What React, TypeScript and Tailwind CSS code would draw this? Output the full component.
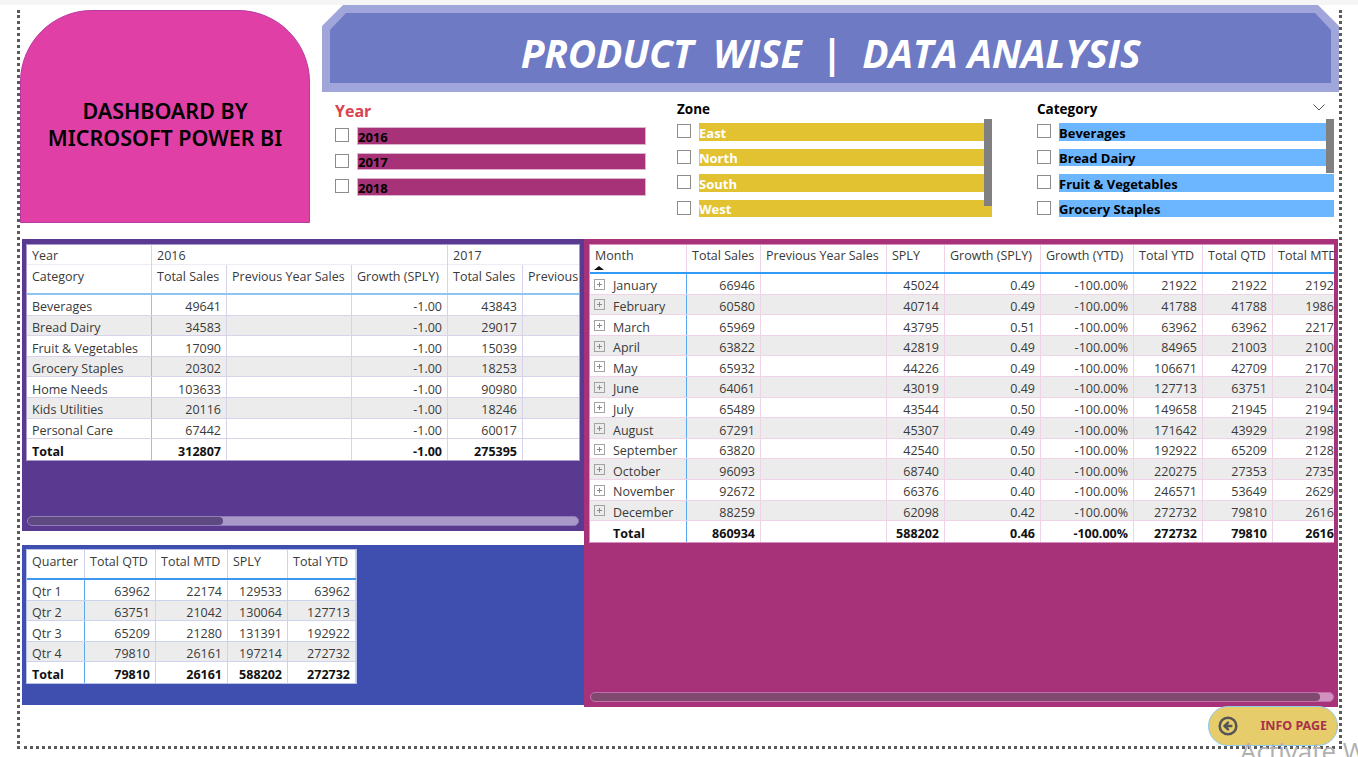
import { CircleArrowLeft } from "lucide-react";

const leftRows = [
  ["Beverages", "49641", "", "-1.00", "43843", ""],
  ["Bread Dairy", "34583", "", "-1.00", "29017", ""],
  ["Fruit & Vegetables", "17090", "", "-1.00", "15039", ""],
  ["Grocery Staples", "20302", "", "-1.00", "18253", ""],
  ["Home Needs", "103633", "", "-1.00", "90980", ""],
  ["Kids Utilities", "20116", "", "-1.00", "18246", ""],
  ["Personal Care", "67442", "", "-1.00", "60017", ""],
];
const leftTotal = ["Total", "312807", "", "-1.00", "275395", ""];

const quarterRows = [
  ["Qtr 1", "63962", "22174", "129533", "63962"],
  ["Qtr 2", "63751", "21042", "130064", "127713"],
  ["Qtr 3", "65209", "21280", "131391", "192922"],
  ["Qtr 4", "79810", "26161", "197214", "272732"],
];
const quarterTotal = ["Total", "79810", "26161", "588202", "272732"];

const monthRows = [
  ["January", "66946", "", "45024", "0.49", "-100.00%", "21922", "21922", "21922"],
  ["February", "60580", "", "40714", "0.49", "-100.00%", "41788", "41788", "19866"],
  ["March", "65969", "", "43795", "0.51", "-100.00%", "63962", "63962", "22174"],
  ["April", "63822", "", "42819", "0.49", "-100.00%", "84965", "21003", "21003"],
  ["May", "65932", "", "44226", "0.49", "-100.00%", "106671", "42709", "21706"],
  ["June", "64061", "", "43019", "0.49", "-100.00%", "127713", "63751", "21042"],
  ["July", "65489", "", "43544", "0.50", "-100.00%", "149658", "21945", "21945"],
  ["August", "67291", "", "45307", "0.49", "-100.00%", "171642", "43929", "21984"],
  ["September", "63820", "", "42540", "0.50", "-100.00%", "192922", "65209", "21280"],
  ["October", "96093", "", "68740", "0.40", "-100.00%", "220275", "27353", "27353"],
  ["November", "92672", "", "66376", "0.40", "-100.00%", "246571", "53649", "26296"],
  ["December", "88259", "", "62098", "0.42", "-100.00%", "272732", "79810", "26161"],
];
const monthTotal = ["Total", "860934", "", "588202", "0.46", "-100.00%", "272732", "79810", "26161"];

const PlusBox = () => (
  <svg width="11" height="11" viewBox="0 0 11 11" className="mr-[8px] -ml-px shrink-0 -mt-[5px]">
    <rect x="0.5" y="0.5" width="10" height="10" fill="none" stroke="#a3a3a3" />
    <path d="M3 5.5h5M5.5 3v5" stroke="#8a8a8a" />
  </svg>
);

type RowProps = {
  cells: string[];
  cols: string;
  divider: string;
  firstDivider: string;
  lineColor: string;
  striped?: boolean;
  bold?: boolean;
  tree?: boolean;
};

const BodyRow = ({ cells, cols, divider, firstDivider, lineColor, striped, bold, tree }: RowProps) => (
  <div
    className={`grid h-[20.6px] ${cols} ${striped ? "bg-[#ececec]" : "bg-white"} ${
      bold ? "font-bold text-[#111]" : `border-b ${lineColor}`
    }`}
  >
    {cells.map((cell, i) => (
      <div
        key={i}
        className={`flex items-center whitespace-nowrap overflow-hidden border-r px-[5px] pt-[6px] ${
          i === 0 ? `justify-start ${firstDivider}` : `justify-end ${divider}`
        }`}
      >
        {tree && i === 0 && !bold && <PlusBox />}
        {tree && i === 0 && bold && <span className="w-[18px] shrink-0" />}
        {cell}
      </div>
    ))}
  </div>
);

const Scrollbar = ({ track, thumb, thumbWidth }: { track: string; thumb: string; thumbWidth: string }) => (
  <div className={`h-[10px] rounded-full border ${track}`}>
    <div className={`h-full rounded-full ${thumb} ${thumbWidth}`} />
  </div>
);

const Check = () => <span className="w-[14px] h-[14px] shrink-0 border border-[#8c8c8c] bg-white mr-[8px]" />;

const SlicerItem = ({ label, bar }: { label: string; bar: string }) => (
  <div className="flex items-start h-[25.5px]">
    <span className="flex mt-[1px]">
      <Check />
    </span>
    <div className={`flex-1 h-[17.5px] flex items-center pt-[3px] text-[13px] leading-none font-bold ${bar}`}>{label}</div>
  </div>
);

export default function App() {
  const leftCols = "grid-cols-[125px_75px_125px_96px_75px_125px]";
  const leftCell = "border-[#d8d2ea]";
  const monthCols = "grid-cols-[97px_74px_126px_58px_96px_93px_69px_70px_74px]";
  const monthCell = "border-[#efd3e6]";
  const quarterCols = "grid-cols-[58px_71px_72px_60px_68px]";
  const quarterCell = "border-[#cdd3ef]";

  return (
    <div className="relative w-[1358px] h-[757px] overflow-hidden bg-white text-[12.5px] text-[#3a3a3a] font-['Open_Sans',sans-serif]">
      <div className="h-[5px] bg-[#f5f5f5]" />
      <div className="mt-[5px] ml-[17px] w-[1325px] h-[739px] border-x-[3px] border-b-[3px] border-dotted border-[#5a5a5a]">
        {/* top row: title block, banner and slicers */}
        <div className="flex h-[213px]">
          <div className="w-[290px] h-[213px] rounded-t-[72px] bg-[#e040a5] border border-[#b63aa4] flex flex-col items-center justify-center pt-[15px] text-black font-semibold text-[21.5px] leading-[27px] font-['Noto_Sans',sans-serif]">
            <span>DASHBOARD BY</span>
            <span>MICROSOFT POWER BI</span>
          </div>
          <div className="ml-[12px] w-[1017px] -mt-[5px]">
            <div className="h-[87px] bg-[#a0a6d9] p-[8px] [clip-path:polygon(21px_0,calc(100%-21px)_0,100%_21px,100%_100%,0_100%,0_21px)]">
              <div className="h-[70px] bg-[#6f7ac4] flex items-center justify-center pt-[11px] text-white italic font-bold text-[39px] tracking-[-0.2px] whitespace-pre [clip-path:polygon(16px_0,calc(100%-16px)_0,100%_17px,100%_100%,0_100%,0_17px)]">
                PRODUCT  WISE  |  DATA ANALYSIS
              </div>
            </div>
            <div className="flex pt-[8px] pl-[13px]">
              <div className="w-[311px]">
                <div className="h-[27px] text-[16px] font-bold text-[#d9434f] leading-[22px]">Year</div>
                <SlicerItem label="2016" bar="bg-[#a83278] border border-[#dcb4d0] text-black" />
                <SlicerItem label="2017" bar="bg-[#a83278] border border-[#dcb4d0] text-black" />
                <SlicerItem label="2018" bar="bg-[#a83278] border border-[#dcb4d0] text-black" />
              </div>
              <div className="relative ml-[31px] w-[315px]">
                <div className="h-[23px] text-[13.5px] font-bold text-black leading-[18px]">Zone</div>
                <SlicerItem label="East" bar="bg-[#e2c230] text-white" />
                <SlicerItem label="North" bar="bg-[#e2c230] text-white" />
                <SlicerItem label="South" bar="bg-[#e2c230] text-white" />
                <SlicerItem label="West" bar="bg-[#e2c230] text-white" />
                <div className="absolute right-0 top-[19px] w-[8px] h-[87px] bg-[#808080]" />
              </div>
              <div className="relative ml-[45px] w-[297px]">
                <div className="h-[23px] text-[13.5px] font-bold text-black leading-[18px]">Category</div>
                <SlicerItem label="Beverages" bar="bg-[#6cb6ff] text-black" />
                <SlicerItem label="Bread Dairy" bar="bg-[#6cb6ff] text-black" />
                <SlicerItem label="Fruit & Vegetables" bar="bg-[#6cb6ff] text-black" />
                <SlicerItem label="Grocery Staples" bar="bg-[#6cb6ff] text-black" />
                <div className="absolute right-0 top-[19px] w-[8px] h-[54px] bg-[#808080]" />
                <svg width="12" height="7" viewBox="0 0 12 7" className="absolute right-[9px] top-[4px]">
                  <path d="M0.5 0.5L6 6L11.5 0.5" fill="none" stroke="#555" />
                </svg>
              </div>
            </div>
          </div>
        </div>

        {/* tables */}
        <div className="flex mt-[16px] ml-[2px]">
          <div className="w-[562px]">
            <div className="h-[292px] bg-[#5a3a90] pt-[5px] px-[4px] pb-[5px] flex flex-col justify-between">
              <div className="border border-[#a99bd0] overflow-hidden bg-white">
                <div className={`grid h-[20px] ${leftCols} border-b border-[#ececf4]`}>
                  <div className={`flex items-center px-[5px] pt-[2px] border-r ${leftCell}`}>Year</div>
                  <div className={`col-span-3 flex items-center px-[5px] pt-[2px] border-r ${leftCell}`}>2016</div>
                  <div className="col-span-2 flex items-center px-[5px] pt-[2px]">2017</div>
                </div>
                <div className={`grid h-[30px] ${leftCols} border-b-2 border-[#8cc4f4]`}>
                  {["Category", "Total Sales", "Previous Year Sales", "Growth (SPLY)", "Total Sales", "Previous Year Sales"].map((h, i) => (
                    <div key={i} className={`px-[5px] pt-[3px] whitespace-nowrap overflow-hidden border-r ${leftCell}`}>
                      {h}
                    </div>
                  ))}
                </div>
                {leftRows.map((r, i) => (
                  <BodyRow key={r[0]} cells={r} cols={leftCols} divider={leftCell} firstDivider="border-[#8cc4f4]" lineColor="border-[#d8d2ea]" striped={i % 2 === 1} />
                ))}
                <BodyRow cells={leftTotal} cols={leftCols} divider={leftCell} firstDivider="border-[#8cc4f4]" lineColor="" bold />
              </div>
              <div className="mx-px">
                <Scrollbar track="bg-[#a899c8] border-[#8f7db8]" thumb="bg-[#5e4a80]" thumbWidth="w-[195px]" />
              </div>
            </div>
            <div className="mt-[14px] h-[160px] bg-[#3f4fb0] pt-[4px] pl-[4px]">
              <div className="w-[331px] border border-[#b8c2ea] overflow-hidden bg-white">
                <div className={`grid h-[30px] ${quarterCols} border-b-2 border-[#3f97ee]`}>
                  {["Quarter", "Total QTD", "Total MTD", "SPLY", "Total YTD"].map((h) => (
                    <div key={h} className={`px-[5px] pt-[3px] whitespace-nowrap overflow-hidden border-r ${quarterCell}`}>
                      {h}
                    </div>
                  ))}
                </div>
                {quarterRows.map((r, i) => (
                  <BodyRow key={r[0]} cells={r} cols={quarterCols} divider={quarterCell} firstDivider="border-[#5aa8f0]" lineColor="border-[#cdd3ef]" striped={i % 2 === 1} />
                ))}
                <BodyRow cells={quarterTotal} cols={quarterCols} divider={quarterCell} firstDivider="border-[#5aa8f0]" lineColor="" bold />
              </div>
            </div>
          </div>

          <div className="w-[754px] h-[468px] bg-[#a8327a] pt-[5px] pl-[5px] pb-[5px] flex flex-col justify-between">
            <div className="w-[745px] border-l border-t border-b border-[#d890c0] overflow-hidden bg-white">
              <div className={`relative grid h-[29px] ${monthCols} border-b-2 border-[#2f9bf5]`}>
                {["Month", "Total Sales", "Previous Year Sales", "SPLY", "Growth (SPLY)", "Growth (YTD)", "Total YTD", "Total QTD", "Total MTD"].map((h) => (
                  <div key={h} className={`px-[5px] pt-[2px] whitespace-nowrap overflow-hidden border-r ${monthCell}`}>
                    {h}
                  </div>
                ))}
                <svg width="10" height="4" viewBox="0 0 10 4" className="absolute left-[4px] top-[21px]">
                  <path d="M5 0L10 4H0Z" fill="#111" />
                </svg>
              </div>
              {monthRows.map((r, i) => (
                <BodyRow key={r[0]} cells={r} cols={monthCols} divider={monthCell} firstDivider="border-[#5aa8f0]" lineColor="border-[#efd3e6]" striped={i % 2 === 1} tree />
              ))}
              <BodyRow cells={monthTotal} cols={monthCols} divider={monthCell} firstDivider="border-[#5aa8f0]" lineColor="" bold tree />
            </div>
            <div className="w-[744px] ml-px">
              <Scrollbar track="bg-[#d090c0] border-[#c070a8]" thumb="bg-[#80496f]" thumbWidth="w-[729px]" />
            </div>
          </div>
        </div>

        <div className="flex justify-end mr-px -mt-px">
          <div className="w-[130px] h-[40px] rounded-full bg-[#e6cc6a] border border-[#8ccaf0] flex items-center pl-[9px] pr-[10px] justify-between">
            <CircleArrowLeft size={20} strokeWidth={3} className="text-[#555]" />
            <span className="text-[12.5px] font-bold text-[#a8324a] font-['Noto_Sans',sans-serif]">INFO PAGE</span>
          </div>
        </div>
      </div>
      <div className="absolute left-[1240px] top-[735px] text-[26px] leading-[32px] text-[#b0b0b0] whitespace-nowrap">Activate Windows</div>
    </div>
  );
}
